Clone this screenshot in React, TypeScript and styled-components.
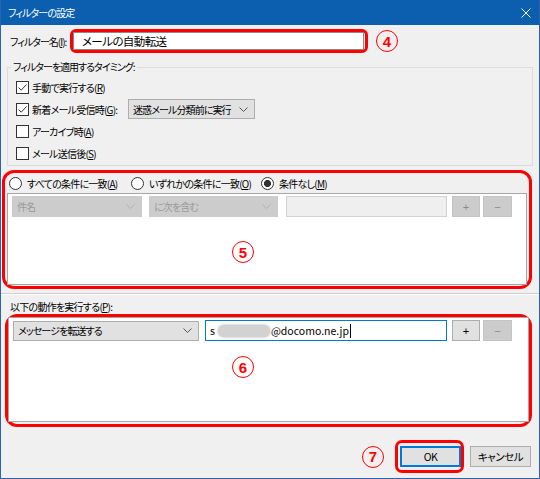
import React from "react";
import styled, { createGlobalStyle } from "styled-components";

const RED = "#ff0000";
const TITLE_BLUE = "#0b5fae";

const GlobalStyle = createGlobalStyle`
  html, body { margin: 0; padding: 0; background: #ffffff; }
  body {
    font-family: "Noto Sans CJK JP", "Noto Sans", sans-serif;
    font-size: 10px;
    color: #000;
  }
  * { box-sizing: border-box; }
`;

const Window = styled.div`
  width: 540px;
  height: 479px;
  background: #f0f0f0;
  border: 1px solid #2a64ad;
  border-top: none;
  display: flex;
  flex-direction: column;
  font-feature-settings: "palt";
  letter-spacing: -0.75px;
  overflow: hidden;
`;

const TitleBar = styled.div`
  height: 25px;
  flex: 0 0 25px;
  background: ${TITLE_BLUE};
  color: #fff;
  display: flex;
  align-items: center;
  justify-content: space-between;
  padding: 0 8px 0 7px;
  font-size: 10px;
  letter-spacing: -0.9px;
`;

const NameRow = styled.div`
  display: flex;
  align-items: center;
  margin-top: 4px;
  height: 24px;
  padding-left: 9px;
`;

const NameLabel = styled.span`
  flex: 0 0 60px;
  min-width: 0;
  white-space: nowrap;
  letter-spacing: -1px;
`;

const Highlight = styled.div<{ $w: number; $h: number; $r: number }>`
  width: ${(p) => p.$w}px;
  height: ${(p) => p.$h}px;
  flex: 0 0 auto;
  border: 3px solid ${RED};
  border-radius: ${(p) => p.$r}px;
  display: flex;
  flex-direction: column;
`;

const NameInput = styled.div`
  flex: 1;
  margin-right: 1px;
  background: #fff;
  border: 1px solid #8a8a8a;
  padding-left: 8px;
  display: flex;
  align-items: center;
  font-size: 11.5px;
  letter-spacing: -0.6px;
`;

const Annot = styled.span<{ $ml?: number; $mt?: number }>`
  width: 22px;
  height: 22px;
  flex: 0 0 22px;
  border: 1.5px solid ${RED};
  border-radius: 50%;
  color: ${RED};
  font-family: "Liberation Sans", Arial, sans-serif;
  font-weight: bold;
  font-size: 15px;
  letter-spacing: 0;
  display: flex;
  align-items: center;
  justify-content: center;
  margin-left: ${(p) => p.$ml ?? 0}px;
  margin-top: ${(p) => p.$mt ?? 0}px;
`;

const Group = styled.fieldset`
  margin: 6px 6px 0;
  padding: 1px 8px 1px 8px;
  border: 1px solid #dcdcdc;
  min-inline-size: 0;
`;

const Legend = styled.legend`
  padding: 0 2px;
  margin-left: -5px;
  line-height: 16px;
  letter-spacing: -1px;
`;

const CheckRow = styled.div`
  height: 22px;
  display: flex;
  align-items: center;
  gap: 3px;
`;

const CheckBox = styled.span`
  width: 13px;
  height: 13px;
  flex: 0 0 13px;
  border: 1px solid #333;
  background: #fff;
  display: flex;
  align-items: center;
  justify-content: center;
`;

const OptText = styled.span<{ $w?: number }>`
  white-space: nowrap;
  min-width: 0;
  ${(p) => (p.$w ? `flex: 0 0 ${p.$w}px;` : "")}
`;

const Select = styled.div<{ $w: number; $ml?: number; $disabled?: boolean }>`
  width: ${(p) => p.$w}px;
  flex: 0 0 ${(p) => p.$w}px;
  height: ${(p) => (p.$disabled ? 21 : 20)}px;
  margin-left: ${(p) => p.$ml ?? 0}px;
  background: ${(p) => (p.$disabled ? "#cccccc" : "#e1e1e1")};
  border: 1px solid ${(p) => (p.$disabled ? "#cccccc" : "#adadad")};
  color: ${(p) => (p.$disabled ? "#9a9a9a" : "#000")};
  display: flex;
  align-items: center;
  justify-content: space-between;
  padding: 0 6px 0 4px;
  white-space: nowrap;
  letter-spacing: -0.9px;
`;

const Chevron = ({ color }: { color: string }) => (
  <svg width="9" height="5" viewBox="0 0 9 5">
    <path d="M0.5 0.5 L4.5 4.5 L8.5 0.5" fill="none" stroke={color} strokeWidth="1" />
  </svg>
);

const RadioRow = styled.div`
  height: 20px;
  flex: 0 0 20px;
  display: flex;
  align-items: center;
  padding-left: 4px;
`;

const RadioOption = styled.div<{ $w?: number }>`
  display: flex;
  align-items: center;
  gap: 5px;
  white-space: nowrap;
  ${(p) => (p.$w ? `flex: 0 0 ${p.$w}px;` : "")}
`;

const Radio = styled.span<{ $on?: boolean }>`
  width: 13px;
  height: 13px;
  flex: 0 0 13px;
  border: 1px solid #333;
  border-radius: 50%;
  background: ${(p) =>
    p.$on ? "radial-gradient(circle, #333 0 3.3px, #fff 3.8px)" : "#fff"};
`;

const List = styled.div<{ $m: string }>`
  flex: 1;
  margin: ${(p) => p.$m};
  background: #fff;
  border: 1px solid #a6a6a6;
  padding: 2px 4px 0;
  display: flex;
  flex-direction: column;
`;

const Row = styled.div`
  display: flex;
  align-items: center;
`;

const TextField = styled.div<{ $w: number; $ml: number; $focus?: boolean }>`
  width: ${(p) => p.$w}px;
  flex: 0 0 ${(p) => p.$w}px;
  height: 21px;
  margin-left: ${(p) => p.$ml}px;
  background: ${(p) => (p.$focus ? "#fff" : "#efefef")};
  border: 1px solid ${(p) => (p.$focus ? "#0078d7" : "#d2d2d2")};
  display: flex;
  align-items: center;
  padding-left: 4px;
  font-size: 10.5px;
  letter-spacing: 0;
  white-space: nowrap;
`;

const Blur = styled.span`
  display: inline-block;
  width: 52px;
  height: 12px;
  margin: 0 1px 0 3px;
  border-radius: 6px;
  background: #d2d2d2;
  box-shadow: 0 0 2px 1px #dcdcdc;
`;

const Caret = styled.span`
  display: inline-block;
  width: 1px;
  height: 14px;
  background: #000;
  margin-left: 1px;
`;

const SmallButton = styled.div<{ $w: number; $ml: number; $disabled?: boolean }>`
  width: ${(p) => p.$w}px;
  flex: 0 0 ${(p) => p.$w}px;
  height: 21px;
  margin-left: ${(p) => p.$ml}px;
  background: ${(p) => (p.$disabled ? "#cccccc" : "#e1e1e1")};
  border: 1px solid ${(p) => (p.$disabled ? "#c4c4c4" : "#adadad")};
  color: ${(p) => (p.$disabled ? "#8a8a8a" : "#000")};
  display: flex;
  align-items: center;
  justify-content: center;
  font-family: "Liberation Sans", Arial, sans-serif;
  font-size: 11px;
  letter-spacing: 0;
`;

const Splitter = styled.div`
  height: 2px;
  margin-top: 4px;
  border-top: 1px solid #d0d0d0;
  border-bottom: 1px solid #ffffff;
`;

const SectionLabel = styled.div`
  margin-top: 5px;
  line-height: 14px;
  height: 14px;
  padding-left: 9px;
`;

const Footer = styled.div`
  margin-top: 13px;
  height: 33px;
  display: flex;
  align-items: center;
  justify-content: flex-end;
  padding-right: 8px;
`;

const DialogButton = styled.div<{ $primary?: boolean; $ml?: number }>`
  width: 61px;
  height: 21px;
  margin-left: ${(p) => p.$ml ?? 0}px;
  background: #e1e1e1;
  border: ${(p) => (p.$primary ? "2px solid #0078d7" : "1px solid #adadad")};
  display: flex;
  align-items: center;
  justify-content: center;
  font-size: 10.5px;
  letter-spacing: -0.5px;
`;

const OkFrame = styled.div`
  width: 69px;
  height: 33px;
  margin-left: 11px;
  border: 3px solid ${RED};
  border-radius: 7px;
  display: flex;
  align-items: center;
  padding-left: 2px;
`;

const CheckMark = () => (
  <svg width="11" height="11" viewBox="0 0 11 11">
    <path d="M1.5 5.5 L4.2 8.2 L9.5 2.5" fill="none" stroke="#333" strokeWidth="1" />
  </svg>
);

const Mn = styled.span`
  text-decoration: underline;
`;

const RegionWrap = styled.div<{ $ml: number; $mt: number }>`
  margin-left: ${(p) => p.$ml}px;
  margin-top: ${(p) => p.$mt}px;
`;

export default function App() {
  return (
    <>
      <GlobalStyle />
      <Window>
        <TitleBar>
          <span>フィルターの設定</span>
          <svg width="10" height="10" viewBox="0 0 10 10">
            <path d="M0.5 0.5 L9.5 9.5 M9.5 0.5 L0.5 9.5" stroke="#fff" strokeWidth="1" />
          </svg>
        </TitleBar>

        <NameRow>
          <NameLabel>
            フィルター名(<Mn>I</Mn>):
          </NameLabel>
          <Highlight $w={298} $h={24} $r={6}>
            <NameInput>メールの自動転送</NameInput>
          </Highlight>
          <Annot $ml={8}>4</Annot>
        </NameRow>

        <Group>
          <Legend>フィルターを適用するタイミング:</Legend>
          <CheckRow>
            <CheckBox>
              <CheckMark />
            </CheckBox>
            <OptText>
              手動で実行する(<Mn>R</Mn>)
            </OptText>
          </CheckRow>
          <CheckRow>
            <CheckBox>
              <CheckMark />
            </CheckBox>
            <OptText $w={93}>
              新着メール受信時(<Mn>G</Mn>):
            </OptText>
            <Select $w={127}>
              <span>迷惑メール分類前に実行</span>
              <Chevron color="#555" />
            </Select>
          </CheckRow>
          <CheckRow>
            <CheckBox />
            <OptText>
              アーカイブ時(<Mn>A</Mn>)
            </OptText>
          </CheckRow>
          <CheckRow>
            <CheckBox />
            <OptText>
              メール送信後(<Mn>S</Mn>)
            </OptText>
          </CheckRow>
        </Group>

        <RegionWrap $ml={1} $mt={4}>
          <Highlight $w={530} $h={119} $r={12}>
            <RadioRow>
              <RadioOption $w={122}>
                <Radio />
                <span>
                  すべての条件に一致(<Mn>A</Mn>)
                </span>
              </RadioOption>
              <RadioOption $w={130}>
                <Radio />
                <span>
                  いずれかの条件に一致(<Mn>O</Mn>)
                </span>
              </RadioOption>
              <RadioOption>
                <Radio $on />
                <span>
                  条件なし(<Mn>M</Mn>)
                </span>
              </RadioOption>
            </RadioRow>
            <List $m="0 2px 1px 2px">
              <Row>
                <Select $w={130} $disabled>
                  <span>件名</span>
                  <Chevron color="#b0b0b0" />
                </Select>
                <Select $w={129} $ml={7} $disabled>
                  <span>に次を含む</span>
                  <Chevron color="#b0b0b0" />
                </Select>
                <TextField $w={161} $ml={8} />
                <SmallButton $w={28} $ml={5} $disabled>
                  +
                </SmallButton>
                <SmallButton $w={29} $ml={3} $disabled>
                  −
                </SmallButton>
              </Row>
              <Row>
                <Annot $ml={220} $mt={24}>
                  5
                </Annot>
              </Row>
            </List>
          </Highlight>
        </RegionWrap>

        <Splitter />
        <SectionLabel>
          以下の動作を実行する(<Mn>P</Mn>):
        </SectionLabel>

        <RegionWrap $ml={4} $mt={0}>
          <Highlight $w={527} $h={113} $r={12}>
            <List $m="0 0 2px 0">
              <Row>
                <Select $w={186} $ml={0}>
                  <span>メッセージを転送する</span>
                  <Chevron color="#555" />
                </Select>
                <TextField $w={242} $ml={6} $focus>
                  <span>s</span>
                  <Blur />
                  <span>@docomo.ne.jp</span>
                  <Caret />
                </TextField>
                <SmallButton $w={28} $ml={5}>
                  +
                </SmallButton>
                <SmallButton $w={29} $ml={3} $disabled>
                  −
                </SmallButton>
              </Row>
              <Row>
                <Annot $ml={219} $mt={15}>
                  6
                </Annot>
              </Row>
            </List>
          </Highlight>
        </RegionWrap>

        <Footer>
          <Annot>7</Annot>
          <OkFrame>
            <DialogButton $primary>OK</DialogButton>
          </OkFrame>
          <DialogButton $ml={6}>キャンセル</DialogButton>
        </Footer>
      </Window>
    </>
  );
}
